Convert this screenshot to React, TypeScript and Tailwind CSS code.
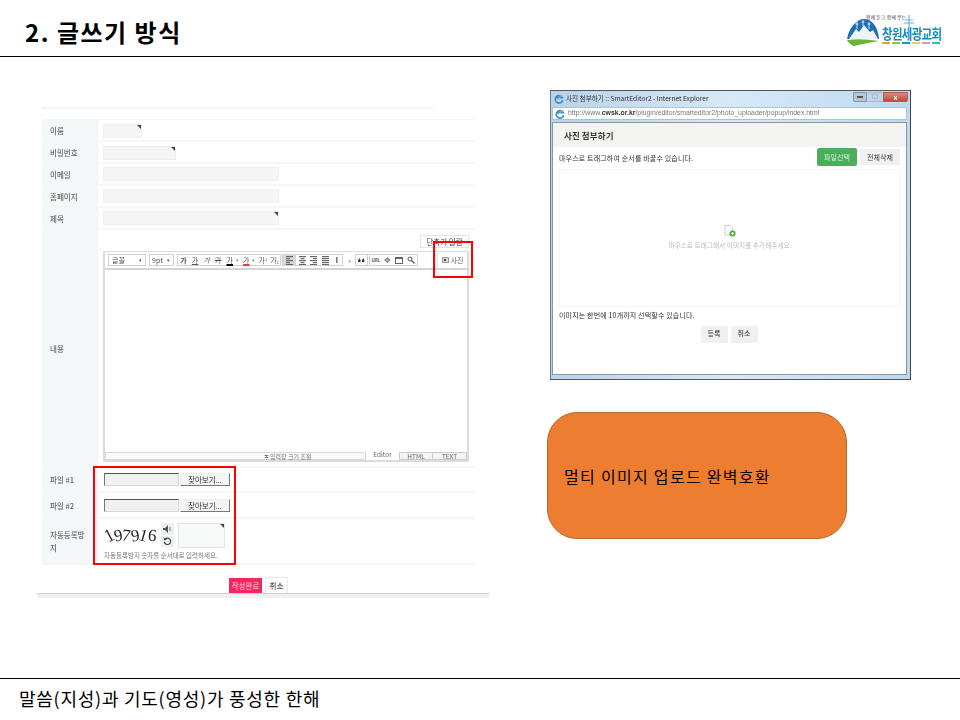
const KR = "font-['Noto_Sans_CJK_KR',sans-serif]";

function Corner() {
  return <span className="absolute top-0 right-0 w-0 h-0 border-t-[4px] border-l-[4px] border-t-[#444] border-l-transparent" />;
}

function Field({ w, corner }: { w: string; corner?: boolean }) {
  return (
    <div className={`relative h-[14px] ${w} bg-[#f5f5f5] border border-[#efefef]`}>
      {corner && <Corner />}
    </div>
  );
}

function Label({ children }: { children: React.ReactNode }) {
  return (
    <div className="w-[56px] shrink-0 bg-[#f5f8f9] border-r border-[#f0f2f3] pl-[8px] pr-[6px] flex items-center text-[7.5px] leading-[13px] font-medium text-[#666]">
      {children}
    </div>
  );
}

function Row({ label, h, children }: { label: string; h: string; children: React.ReactNode }) {
  return (
    <div className={`flex ${h} border-b-[2px] border-[#f6f6f6]`}>
      <Label>{label}</Label>
      <div className="flex-1 min-w-0 pl-[5px]">{children}</div>
    </div>
  );
}

function Glyph({ children, cls = "" }: { children: React.ReactNode; cls?: string }) {
  return <span className={`w-[11.6px] text-center text-[7px] leading-none text-[#555] ${cls}`}>{children}</span>;
}

function AlignIcon({ kind }: { kind: "l" | "c" | "r" | "j" }) {
  const rows = [0, 2, 4, 6, 8];
  return (
    <svg width="7" height="9" viewBox="0 0 7 9" className="block">
      {rows.map((y, i) => {
        const short = i % 2 === 1 && kind !== "j";
        const w = short ? 4 : 7;
        const x = kind === "l" ? 0 : kind === "c" ? (7 - w) / 2 : 7 - w;
        return <rect key={y} x={x} y={y} width={w} height="1.2" fill="#666" />;
      })}
    </svg>
  );
}

function Toolbar() {
  return (
    <div className="h-[18px] border-b-2 border-[#d4d4d4] flex items-center pl-[3px] pr-[3px]">
      <div className="w-[39px] h-[12px] bg-white border border-[#d0d0d0] flex items-center justify-between pl-[3px] pr-[3px] text-[7px] text-[#555]">
        <span>글꼴</span><span className="text-[5px]">▾</span>
      </div>
      <div className="ml-[3px] w-[25px] h-[12px] bg-white border border-[#d0d0d0] flex items-center justify-between pl-[2px] pr-[3px] text-[7px] text-[#555]">
        <span>9pt</span><span className="text-[5px]">▾</span>
      </div>
      <div className="ml-[3px] w-[107px] h-[12px] bg-white border border-[#d0d0d0] flex items-center">
        <Glyph cls="font-bold text-[#222]">가</Glyph>
        <Glyph cls="underline">가</Glyph>
        <Glyph cls="italic">가</Glyph>
        <Glyph cls="line-through">가</Glyph>
        <Glyph cls="underline decoration-black decoration-2">가</Glyph>
        <span className="text-[5px] w-[5px] text-[#888]">▾</span>
        <Glyph cls="underline decoration-[#e04040] decoration-2">가</Glyph>
        <span className="text-[5px] w-[5px] text-[#888]">▾</span>
        <Glyph>가<sup className="text-[4px]">1</sup></Glyph>
        <Glyph>가<sub className="text-[4px]">1</sub></Glyph>
      </div>
      <div className="ml-[1px] w-[61px] h-[12px] bg-white border border-[#d0d0d0] flex items-center">
        <span className="w-[13px] h-[10px] bg-[#d8d8d8] flex items-center justify-center"><AlignIcon kind="l" /></span>
        <span className="w-[12px] flex justify-center"><AlignIcon kind="c" /></span>
        <span className="w-[11px] flex justify-center"><AlignIcon kind="r" /></span>
        <span className="w-[12px] flex justify-center"><AlignIcon kind="j" /></span>
        <span className="w-[11px] text-center text-[8px] leading-none font-bold text-[#555]">I</span>
      </div>
      <span className="w-[11px] ml-[1px] text-center text-[7px] leading-none text-[#888]">»</span>
      <div className="w-[13px] h-[12px] bg-white border border-[#d0d0d0] flex items-center justify-center">
        <svg width="7" height="4" viewBox="0 0 7 4"><path d="M0 3a1.2 1.2 0 1 0 2.6 0c0-1-.5-2-1.2-3C1 1 0 2 0 3ZM3.8 3a1.2 1.2 0 1 0 2.6 0c0-1-.5-2-1.2-3C4.800 1 3.800 2 3.800 3Z" fill="#333" /></svg>
      </div>
      <div className="ml-[1px] w-[49px] h-[12px] bg-white border border-[#d0d0d0] flex items-center">
        <span className="w-[12px] pl-[1px] text-center text-[4.5px] font-bold text-[#555]">URL</span>
        <span className="w-[13px] text-center text-[8px] leading-none text-[#777]">✥</span>
        <span className="w-[12px] flex justify-center"><span className="block w-[8px] h-[7px] border border-[#666] border-t-2" /></span>
        <span className="w-[12px] flex justify-center">
          <svg width="8" height="8" viewBox="0 0 8 8"><circle cx="3" cy="3" r="2" fill="none" stroke="#555" strokeWidth="1" /><path d="M4.500 4.500L7.500 7.500" stroke="#555" strokeWidth="1.300" /></svg>
        </span>
      </div>
      <div className="ml-[19px] w-[28px] h-[14px] border-l border-[#e2e2e2] pl-[4px] flex items-center gap-[2px] text-[7px] text-[#666]">
        <span className="w-[7px] h-[6px] bg-[#ddd] border border-[#999] flex items-center justify-center"><span className="block w-[2px] h-[2px] bg-[#444]" /></span>
        <span>사진</span>
      </div>
    </div>
  );
}

function Editor() {
  return (
    <div className="w-[366px] h-[211px] border-2 border-t border-[#dcdcdc] flex flex-col">
      <Toolbar />
      <div className="flex-1 bg-white" />
      <div className="h-[8px] flex bg-white">
        <div className="flex-1 bg-[#fafafa] border border-[#d8d8d8] text-center text-[6px] leading-[7px] text-[#777] pl-[104px]">≑ 입력창 크기 조절</div>
        <div className="w-[33px] bg-white text-center text-[6.5px] leading-[7px] text-[#666] -mt-[1px]">Editor</div>
        <div className="w-[34px] bg-[#f4f4f4] border border-[#ccc] text-center text-[6.5px] leading-[6px] text-[#666]">HTML</div>
        <div className="w-[34px] bg-[#f4f4f4] border-y border-r border-[#ccc] text-center text-[6.5px] leading-[6px] text-[#666]">TEXT</div>
      </div>
    </div>
  );
}

function FileField({ pt }: { pt: string }) {
  return (
    <div className={`flex gap-[1px] pl-[1px] ${pt}`}>
      <div className="w-[75px] h-[13px] bg-[#f0f0f0] border border-[#d8d8d8] border-t-[#555] border-l-[#777]" />
      <div className="w-[50px] h-[13px] bg-[#f4f4f4] border border-[#eee] border-r-[#777] border-b-[#777] text-center text-[7.5px] leading-[11px] text-[#333]">찾아보기...</div>
    </div>
  );
}

function Captcha() {
  return (
    <div className="w-[57px] ml-[1px] bg-white flex items-center justify-start pl-[1px] font-['Liberation_Serif',serif] text-[17px] leading-none text-[#222]">
      <span className="inline-block -rotate-[28deg] scale-y-[1.1]">1</span>
      <span className="inline-block rotate-[170deg]">6</span>
      <span className="inline-block rotate-[8deg]">7</span>
      <span className="inline-block -rotate-[10deg]">9</span>
      <span className="inline-block rotate-[16deg]">1</span>
      <span className="inline-block rotate-[6deg]">6</span>
    </div>
  );
}

function LeftPane() {
  return (
    <div className="relative w-[452px] ml-[37px] pt-[50px]">
      <div className="ml-[5px] w-[391px] h-[2px] bg-[#f3f3f3]" />
      <div className="mt-[10px] ml-[5px] w-[433px] border-t border-[#f6f6f6] blur-[0.35px]">
        <Row label="이름" h="h-[22px]"><div className="pt-[4px]"><Field w="w-[39px]" corner /></div></Row>
        <Row label="비밀번호" h="h-[22px]"><div className="pt-[4px]"><Field w="w-[73px]" corner /></div></Row>
        <Row label="이메일" h="h-[22px]"><div className="pt-[3px]"><Field w="w-[176px]" /></div></Row>
        <Row label="홈페이지" h="h-[22px]"><div className="pt-[3px]"><Field w="w-[176px]" /></div></Row>
        <Row label="제목" h="h-[22px]"><div className="pt-[3px]"><Field w="w-[176px]" corner /></div></Row>
        <Row label="내용" h="h-[238px]">
          <div className="flex flex-col">
            <div className="mt-[5px] mr-[6px] self-end w-[49px] h-[13px] bg-white border border-[#e4e4e4] text-center text-[7.5px] leading-[11px] text-[#444]">단축키 일람</div>
            <div className="mt-[3px]"><Editor /></div>
          </div>
        </Row>
        <Row label="파일 #1" h="h-[25px]"><FileField pt="pt-[5px]" /></Row>
        <Row label="파일 #2" h="h-[26px]"><FileField pt="pt-[6px]" /></Row>
        <Row label="자동등록방지" h="h-[46px]">
          <div className="pt-[4px]">
            <div className="flex h-[24px]">
              <Captcha />
              <div className="w-[13px] flex flex-col gap-[1px] bg-white">
                <div className="flex-1 bg-[#eef1f1] flex items-center justify-center">
                  <svg width="9" height="8" viewBox="0 0 9 8"><path d="M0 3h2l3-3v8L2 5H0z" fill="#555" /><path d="M7 2v4" stroke="#777" /></svg>
                </div>
                <div className="flex-1 bg-[#eef1f1] flex items-center justify-center">
                  <svg width="9" height="9" viewBox="0 0 9 9"><path d="M2 2.200A3.200 3.200 0 1 1 1.300 5" fill="none" stroke="#444" strokeWidth="1.200" /><path d="M0.500 0.500L1.200 3.400 4 2.500z" fill="#444" /></svg>
                </div>
              </div>
              <div className="relative ml-[4px] w-[47px] h-[25px] bg-[#f8faf9] border border-[#dfe5e2]"><Corner /></div>
            </div>
            <div className="mt-[3px] pl-[1px] text-[6.5px] leading-[10px] text-[#777]">자동등록방지 숫자를 순서대로 입력하세요.</div>
          </div>
        </Row>
      </div>
      <div className="mt-[12px] flex pl-[192px] gap-[3px] items-end">
        <div className="w-[33px] h-[15px] bg-[#f7245f] text-center text-[7.5px] leading-[15px] text-[#ffd5df]">작성완료</div>
        <div className="w-[23px] h-[16px] bg-white border border-[#e8e8e8] border-b-0 text-center text-[7.5px] leading-[16px] font-medium text-[#555]">취소</div>
      </div>
      <div className="h-[5px] bg-[#f0eeee] border-t-[1.5px] border-[#d0d0d0]" />
      <div className="absolute left-[396px] top-[184px] w-[40px] h-[37px] border-2 border-[#ff0000]" />
      <div className="absolute left-[56px] top-[409px] w-[143px] h-[99px] border-2 border-[#ff0000]" />
    </div>
  );
}

function IeIcon() {
  return (
    <svg width="10" height="10" viewBox="0 0 10 10" className="shrink-0">
      <path d="M8.600 6.200A3.700 3.700 0 1 1 8.300 3.700H2.200" fill="none" stroke="#2f8fdc" strokeWidth="1.700" />
      <path d="M1 8.800C2.500 6 6 2 9.200 1" fill="none" stroke="#e8b93a" strokeWidth="0.800" />
    </svg>
  );
}

function WindowPane() {
  return (
    <div className="w-[361px] h-[290px] border border-[#6a7885] border-y-[#555] border-r-[#444] bg-gradient-to-r from-[#b9d3ea] via-[#d7e9f7] to-[#bcd9f0] pl-[1px] pr-[3px] flex flex-col blur-[0.35px]">
      <div className="h-[16px] flex items-center pl-[2px]">
        <IeIcon />
        <span className="ml-[2px] text-[6.6px] text-[#333] whitespace-nowrap">사진 첨부하기 :: SmartEditor2 - Internet Explorer</span>
        <div className="ml-auto -mr-[1px] -mt-[5px] flex h-[10px]">
          <span className="w-[14px] bg-[#b9c6d2] border border-[#8a97a3] rounded-bl-[2px] flex items-center justify-center"><span className="block w-[6px] h-[2px] bg-[#555]" /></span>
          <span className="w-[16px] bg-[#bfd6ea] border-y border-[#a9bccd] flex items-center justify-center"><span className="block w-[6px] h-[5px] border border-[#a8bacb]" /></span>
          <span className="w-[25px] bg-gradient-to-b from-[#d98a80] to-[#c4453a] border border-[#a5605a] rounded-br-[2px] text-center text-[7px] leading-[8px] font-bold text-white">x</span>
        </div>
      </div>
      <div className="h-[13px] bg-white border border-[#a7c4dd] flex items-center pl-[2px]">
        <IeIcon />
        <span className="ml-[3px] text-[6.9px] text-[#777] font-['Liberation_Sans',sans-serif] whitespace-nowrap">http://www.<b className="text-[#333]">cwsk.or.kr</b>/plugin/editor/smarteditor2/photo_uploader/popup/index.html</span>
      </div>
      <div className="mt-[2px] flex-1 bg-white border border-[#8a97a3] flex flex-col">
        <div className="h-[24px] bg-[#f3f3f1] pl-[11px] flex items-center text-[8.5px] font-bold text-[#333] tracking-[0.1px]">사진 첨부하기</div>
        <div className="h-[22px] flex items-center justify-between pl-[6px] pr-[6px]">
          <span className="text-[7px] tracking-[0.15px] text-[#333]">마우스로 트래그하여 순서를 바꿀수 있습니다.</span>
          <div className="flex gap-[3px] items-center -mt-[2px]">
            <span className="w-[40px] h-[18px] bg-[#4cae5a] rounded-[2px] text-center text-[7px] leading-[18px] text-[#d9f0dc]">파일선택</span>
            <span className="w-[40px] h-[16px] bg-[#f0f0f0] rounded-[1px] text-center text-[7px] leading-[16px] text-[#333]">전체삭제</span>
          </div>
        </div>
        <div className="ml-[6px] mr-[5px] h-[138px] border border-[#f3f3f3] flex flex-col items-center pt-[55px]">
          <svg width="12" height="12" viewBox="0 0 12 12">
            <path d="M1 .5h5l2.500 2.500v7H1z" fill="#fff" stroke="#bbb" strokeWidth="0.800" />
            <circle cx="8.500" cy="8.500" r="3" fill="#4cae20" />
            <path d="M8.500 7v3M7 8.500h3" stroke="#fff" strokeWidth="1.200" />
          </svg>
          <span className="mt-[3px] text-[6.7px] leading-[10px] text-[#bbb]">마우스로 트래그해서 이미지를 추가해주세요.</span>
        </div>
        <div className="pl-[6px] mt-[3px] text-[7px] tracking-[0.15px] leading-[10px] text-[#333]">이미지는 한번에 10개까지 선택할수 있습니다.</div>
        <div className="mt-[6px] flex justify-center gap-[3px] -ml-[1px]">
          <span className="w-[27px] h-[17px] bg-[#f0f0f0] text-center text-[7px] leading-[15px] text-[#444] font-medium">등록</span>
          <span className="w-[27px] h-[17px] bg-[#f0f0f0] text-center text-[7px] leading-[15px] text-[#444] font-medium">취소</span>
        </div>
      </div>
      <div className="h-[4px]" />
    </div>
  );
}

function Logo() {
  const strips = ["#f39a2b", "#9ac73d", "#1f93c9", "#f5cf3c", "#ee8cb8", "#35bfc4"];
  return (
    <div className="relative flex items-start w-[98px] h-[33px] mr-[16px] mt-[2px]">
      <svg width="34" height="28" viewBox="0 0 34 28" className="shrink-0 mt-[5px]">
        <path d="M1 21C3 8 12 1 18 1C27 1 32 10 33 21Z" fill="#1e6fb5" />
        <path d="M3 21L10 11L13 14L18 7L24 14L27 12L32 21Z" fill="#eef3f6" />
        <path d="M1 22Q16 20 33 23Q20 25 8 28Q3 26 1 22Z" fill="#6bb536" />
        <path d="M11 4v7M9.500 6h3M17 2v6M15.500 4h3M23 4v7M21.500 6h3" stroke="#fff" strokeWidth="0.800" />
      </svg>
      <div className="ml-[2px] flex flex-col items-start">
        <span className="absolute top-[1px] left-[20px] text-[5px] leading-[6px] text-[#444] whitespace-nowrap">함께 듣고 함께 웃는</span>
        <span className="mt-[13px] text-[11.500px] leading-[15px] font-bold text-[#128dbb] tracking-[-0.7px] whitespace-nowrap scale-y-[1.2]">창원세광교회</span>
        <div className="flex gap-[2px] mt-[1px]">
          {strips.map((c) => <span key={c} className="block w-[8px] h-[2px]" style={{ background: c }} />)}
        </div>
      </div>
      <svg width="10" height="24" viewBox="0 0 10 24" className="absolute left-[58px] top-[2px]">
        <path d="M5 0v24M1 5h8M0 8h10" stroke="#6fb0dc" strokeWidth="1.200" />
      </svg>
    </div>
  );
}

export default function App() {
  return (
    <div className={`w-[960px] h-[720px] bg-white flex flex-col overflow-hidden ${KR}`}>
      <header className="h-[57px] shrink-0 border-b border-black flex items-center justify-between pl-[25px]">
        <h1 className="text-[24px] leading-none font-bold text-black mt-[8px] tracking-[1.500px]">2. 글쓰기 방식</h1>
        <Logo />
      </header>
      <main className="h-[621px] shrink-0 flex">
        <LeftPane />
        <div className="ml-[61px] pt-[33px] flex flex-col items-start">
          <WindowPane />
          <div className="mt-[32px] -ml-[3px] w-[300px] h-[127px] rounded-[30px] bg-[#ed7d31] border border-[#b8692c] flex items-center pl-[16px] text-[16px] text-black tracking-[1.300px]">
            멀티 이미지 업로드 완벽호환
          </div>
        </div>
      </main>
      <footer className="flex-1 border-t border-black pl-[19px] pt-[7px] text-[18px] leading-[24px] text-black tracking-[0.750px]">
        말씀(지성)과 기도(영성)가 풍성한 한해
      </footer>
    </div>
  );
}
